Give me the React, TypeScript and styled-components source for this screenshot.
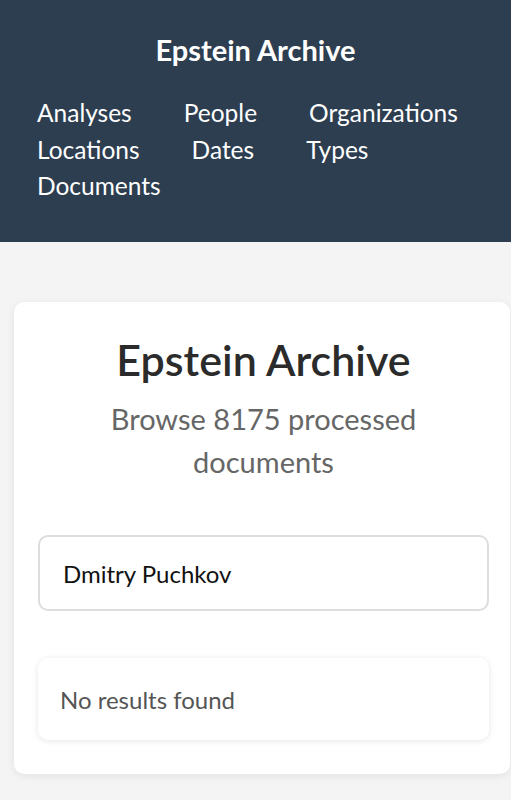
import React from "react";
import styled, { createGlobalStyle } from "styled-components";

const Global = createGlobalStyle`
  html, body { margin: 0; padding: 0; background: #f4f4f4; }
  body { font-family: Lato, "Noto Sans", sans-serif; }
  * { box-sizing: border-box; }
`;

const Header = styled.header`
  background: #2d3e50;
  height: 242px;
  padding: 33px 37px 0 37px;
`;

const Brand = styled.h1`
  margin: 0;
  text-align: center;
  color: #ffffff;
  font-size: 29px;
  font-weight: 700;
  line-height: 34px;
`;

const Nav = styled.nav`
  display: flex;
  flex-wrap: wrap;
  column-gap: 52px;
  margin-top: 28px;
`;

const NavLink = styled.a`
  color: #ffffff;
  font-size: 24.5px;
  line-height: 36.5px;
  text-decoration: none;
`;

const Main = styled.main`
  padding: 60px 1px 28px 14px;
`;

const Card = styled.section`
  background: #ffffff;
  border-radius: 10px;
  box-shadow: 0 2px 8px rgba(0, 0, 0, 0.08);
  padding: 32px 21px 34px 24px;
`;

const Title = styled.h2`
  margin: 0;
  text-align: center;
  color: #2b2b2b;
  font-size: 43px;
  font-weight: 600;
  line-height: 52px;
`;

const Subtitle = styled.p`
  margin: 11px auto 0;
  max-width: 340px;
  text-align: center;
  color: #666666;
  font-size: 29px;
  line-height: 43px;
`;

const Search = styled.input`
  display: block;
  width: 100%;
  height: 76px;
  margin-top: 52px;
  padding: 0 23px;
  border: 2px solid #dddddd;
  border-radius: 10px;
  font-family: inherit;
  font-size: 24px;
  color: #111111;
  background: #ffffff;
  outline: none;
`;

const Results = styled.div`
  margin-top: 47px;
  height: 82px;
  display: flex;
  align-items: center;
  padding: 0 22px;
  border-radius: 10px;
  background: #ffffff;
  box-shadow: 0 1px 6px rgba(0, 0, 0, 0.1);
  color: #555555;
  font-size: 24px;
`;

const links = ["Analyses", "People", "Organizations", "Locations", "Dates", "Types", "Documents"];

export default function App() {
  return (
    <>
      <Global />
      <Header>
        <Brand>Epstein Archive</Brand>
        <Nav>
          {links.map((l) => (
            <NavLink key={l} href="#">
              {l}
            </NavLink>
          ))}
        </Nav>
      </Header>
      <Main>
        <Card>
          <Title>Epstein Archive</Title>
          <Subtitle>Browse 8175 processed documents</Subtitle>
          <Search defaultValue="Dmitry Puchkov" />
          <Results>No results found</Results>
        </Card>
      </Main>
    </>
  );
}
